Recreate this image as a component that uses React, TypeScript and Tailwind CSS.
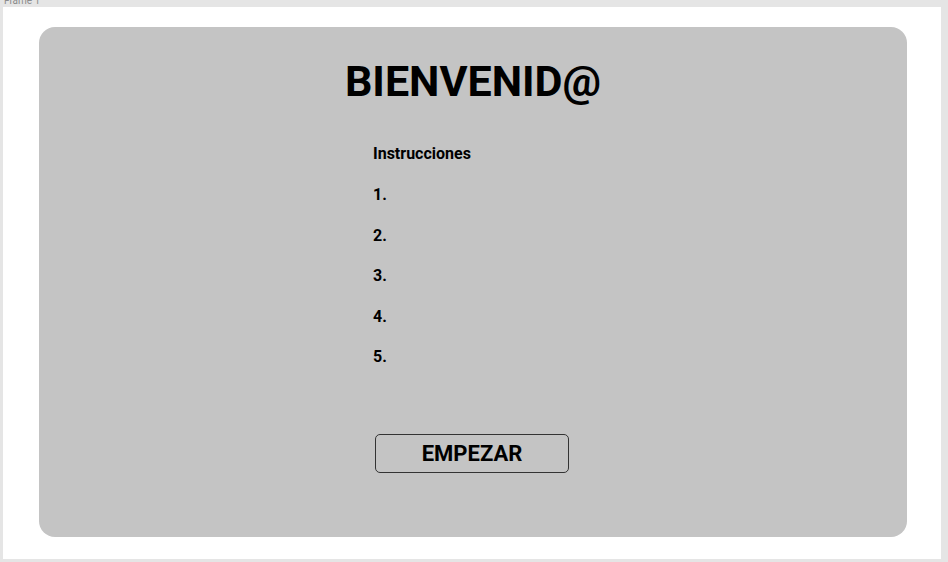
export default function App() {
  return (
    <div className="w-[948px] h-[562px] bg-[#e5e5e5] relative overflow-hidden" style={{ fontFamily: "Roboto, 'Liberation Sans', sans-serif" }}>
      <div className="absolute left-[4px] top-[-7px] text-[10px] text-[#8c8c8c]">Frame 1</div>
      <div className="pt-[7px] pl-[3px]">
        <div className="w-[938px] h-[552px] bg-white pt-[20px] pl-[36px]">
          <div className="w-[868px] h-[510px] bg-[#c4c4c4] rounded-[16px] flex flex-col items-center pt-[29px]">
            <h1 className="text-[43px] leading-[50px] font-bold text-black">BIENVENID@</h1>
            <div className="w-[200px] mt-[38px] flex flex-col text-black">
              <div className="text-[16px] leading-[19px] font-bold">Instrucciones</div>
              <div className="mt-[22px] flex flex-col gap-[21.5px] text-[16px] leading-[19px] font-bold">
                <div>1.</div>
                <div>2.</div>
                <div>3.</div>
                <div>4.</div>
                <div>5.</div>
              </div>
              <button className="mt-[68px] ml-[2px] w-[194px] h-[39px] border border-[#333333] rounded-[5px] flex items-center justify-center text-[22px] font-bold text-black">
                EMPEZAR
              </button>
            </div>
          </div>
        </div>
      </div>
    </div>
  );
}
